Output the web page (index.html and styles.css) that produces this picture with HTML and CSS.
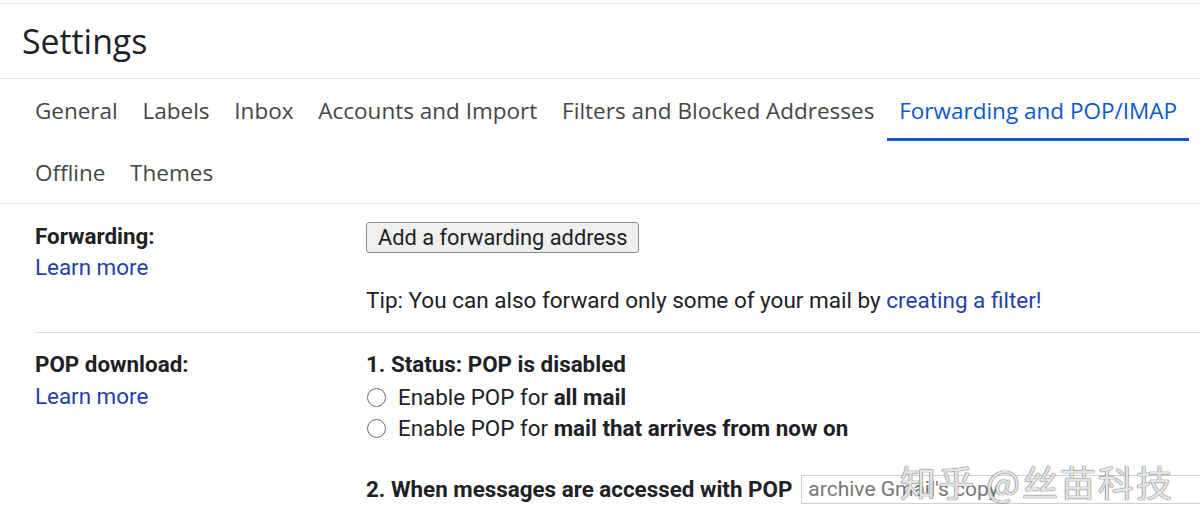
FILE: index.html
```html
<!DOCTYPE html>
<html lang="en">
<head>
    <meta charset="UTF-8">
    <meta name="viewport" content="width=device-width, initial-scale=1.0">
    <title>Settings - Forwarding and POP/IMAP</title>
    <link rel="stylesheet" href="styles.css">
</head>
<body>
    <div class="header">
        <h1>Settings</h1>
    </div>

    <div class="tabs">
        <a class="tab">General</a>
        <a class="tab">Labels</a>
        <a class="tab">Inbox</a>
        <a class="tab">Accounts and Import</a>
        <a class="tab">Filters and Blocked Addresses</a>
        <a class="tab active">Forwarding and POP/IMAP</a>
        <a class="tab">Offline</a>
        <a class="tab">Themes</a>
    </div>

    <div class="section forwarding">
        <div class="label">
            <b>Forwarding:</b>
            <a class="link">Learn more</a>
        </div>
        <div class="content">
            <button class="btn">Add a forwarding address</button>
            <p class="tip">Tip: You can also forward only some of your mail by <a class="link">creating a filter!</a></p>
        </div>
    </div>

    <div class="section pop">
        <div class="label">
            <b>POP download:</b>
            <a class="link">Learn more</a>
        </div>
        <div class="content">
            <b class="status">1. Status: POP is disabled</b>
            <label class="radio"><span class="dot"></span><span>Enable POP for <b>all mail</b></span></label>
            <label class="radio"><span class="dot"></span><span>Enable POP for <b>mail that arrives from now on</b></span></label>
            <div class="step">
                <b>2. When messages are accessed with POP</b>
                <span class="select">archive Gmail's copy</span>
            </div>
        </div>
    </div>

    <div class="watermark">知乎 @丝苗科技</div>
</body>
</html>
```

FILE: styles.css
```css
body {
    margin: 0;
    font-family: Roboto, Arial, sans-serif;
    color: #202124;
    background: #fff;
    overflow: hidden;
}
.header {
    margin-top: 3px;
    border-top: 1px solid #e6e6e6;
    border-bottom: 1px solid #e6e6e6;
    height: 74px;
    padding-left: 22px;
}
.header h1 {
    margin: 0;
    font-family: "Open Sans", sans-serif;
    font-weight: 400;
    font-size: 33.8px;
    line-height: 74px;
}
.tabs {
    display: flex;
    flex-wrap: wrap;
    padding-left: 22.5px;
    border-bottom: 1px solid #e6e6e6;
}
.tab {
    font-family: "Open Sans", sans-serif;
    font-size: 22.5px;
    color: #444746;
    height: 62px;
    line-height: 64px;
    padding: 0 12.4px;
    box-sizing: border-box;
}
.tab.active {
    color: #0b57d0;
    border-bottom: 3px solid #0b57d0;
}
.section {
    display: grid;
    grid-template-columns: 331px 1fr;
    margin-left: 35px;
    font-size: 22.4px;
    line-height: 31px;
}
.forwarding {
    padding: 16.5px 0 16.5px;
}
.pop {
    border-top: 1px solid #dcdcdc;
    padding-top: 15.5px;
    padding-bottom: 20px;
}
.label b {
    display: block;
    font-weight: 700;
}
.link {
    color: #1f3fad;
}
.label .link {
    display: block;
}
.pop .label .link {
    margin-top: 1px;
}
.btn {
    display: block;
    height: 31px;
    margin-top: 1.5px;
    font-family: Roboto, Arial, sans-serif;
    font-size: 21.8px;
    color: #202124;
    background: #efefef;
    border: 1px solid #8a8a8a;
    border-radius: 3px;
    padding: 0 11px;
}
.tip {
    margin: 31.5px 0 0;
    font-size: 22.5px;
}
.status {
    display: block;
}
.radio {
    display: flex;
    align-items: center;
}
.radio:first-of-type {
    margin-top: 2px;
}
.dot {
    width: 17px;
    height: 17px;
    border: 1px solid #6b6b6b;
    border-radius: 50%;
    margin: 0 12px 0 1px;
}
.step {
    display: flex;
    align-items: center;
    margin-top: 30px;
}
.select {
    margin-left: 9px;
    flex: 1;
    height: 27px;
    line-height: 27px;
    border: 1px solid #cfcfcf;
    border-right: none;
    color: #777;
    padding: 0 6px;
    font-size: 21px;
}
.watermark {
    position: absolute;
    left: 900px;
    top: 455px;
    font-family: "Noto Sans CJK SC", sans-serif;
    font-size: 36px;
    color: rgba(255, 255, 255, 0.85);
    text-shadow: 0 0 1px #555, 0 0 1px #555;
    letter-spacing: 2px;
}
```
